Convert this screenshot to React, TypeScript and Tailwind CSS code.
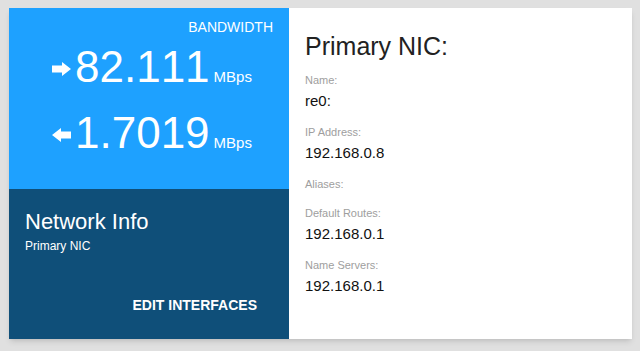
import React from "react";

const font = { fontFamily: '"Liberation Sans", Arial, sans-serif' };

function ArrowIcon({ dir }: { dir: "in" | "out" }) {
  return (
    <svg
      viewBox="0 0 19 14"
      className={`mr-[4px] h-[14px] w-[19px] shrink-0 -translate-y-[6px] fill-white ${dir === "in" ? "-scale-x-100" : ""}`}
      aria-hidden="true"
    >
      <path d="M0 3.5H10V0L19 7L10 14V10.5H0Z" />
    </svg>
  );
}

function Rate({ dir, value }: { dir: "in" | "out"; value: string }) {
  return (
    <div className="flex items-baseline pl-[43px]">
      <ArrowIcon dir={dir} />
      <span className="text-[44px] leading-none [font-kerning:none]">{value}</span>
      <span className="ml-[4px] text-[15px] leading-none">MBps</span>
    </div>
  );
}

const fields = [
  { label: "Name:", value: "re0:" },
  { label: "IP Address:", value: "192.168.0.8" },
  { label: "Aliases:", value: "" },
  { label: "Default Routes:", value: "192.168.0.1" },
  { label: "Name Servers:", value: "192.168.0.1" },
];

export default function App() {
  return (
    <div className="min-h-[351px] bg-[#e0e0e0] pt-2 pr-2 pb-3 pl-[9px]" style={font}>
      <div className="flex h-[331px] bg-white shadow-md">
        {/* Left column */}
        <div className="flex w-[280px] shrink-0 flex-col text-white">
          <div className="h-[181px] bg-[#1ea1ff] pt-[9px]">
            <p className="pr-4 text-right text-[14px] leading-5">BANDWIDTH</p>
            <div className="mt-[8px]">
              <Rate dir="out" value="82.111" />
            </div>
            <div className="mt-[22px]">
              <Rate dir="in" value="1.7019" />
            </div>
          </div>
          <div className="flex flex-1 flex-col justify-between bg-[#0f4f79] pt-5 pr-4 pb-4 pl-4">
            <div>
              <h2 className="text-[22px] leading-[26px]">Network Info</h2>
              <p className="mt-[3px] text-[12px] leading-4">Primary NIC</p>
            </div>
            <button className="self-end px-4 py-2 text-[14px] font-bold leading-5 uppercase">
              Edit Interfaces
            </button>
          </div>
        </div>

        {/* Right column */}
        <div className="flex-1 pt-6 pl-4">
          <h1 className="text-[25px] leading-7 text-[#222]">Primary NIC:</h1>
          <dl className="mt-3 flex flex-col gap-[13px]">
            {fields.map((f) => (
              <div key={f.label}>
                <dt className="text-[11px] leading-4 text-[#9e9e9e]">{f.label}</dt>
                {f.value && (
                  <dd className="mt-[3px] text-[15px] leading-5 text-[#111]">{f.value}</dd>
                )}
              </div>
            ))}
          </dl>
        </div>
      </div>
    </div>
  );
}
